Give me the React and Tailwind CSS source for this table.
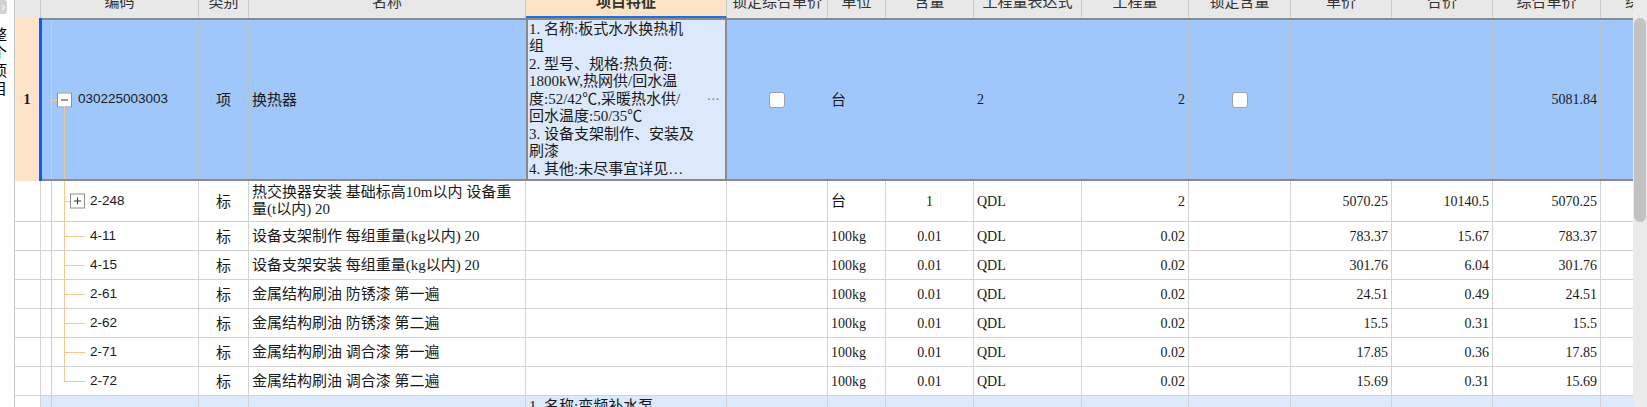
import React from 'react';

const SERIF = "font-['Liberation_Serif','Noto_Sans_CJK_SC',serif]";
const SANS = "font-['Liberation_Sans','Noto_Sans_CJK_SC',sans-serif]";
const CJK = "font-['Noto_Sans_CJK_SC',sans-serif]";
const ORANGE = 'bg-[#f8c78b]';

const headers = [
  { label: '', w: 'w-[26px]' },
  { label: '编码', w: 'w-[158px]' },
  { label: '类别', w: 'w-[50px]' },
  { label: '名称', w: 'w-[277px]' },
  { label: '项目特征', w: 'w-[201px]', active: true },
  { label: '锁定综合单价', w: 'w-[101px]' },
  { label: '单位', w: 'w-[58px]' },
  { label: '含量', w: 'w-[88px]' },
  { label: '工程量表达式', w: 'w-[108px]' },
  { label: '工程量', w: 'w-[107px]' },
  { label: '锁定含量', w: 'w-[102px]' },
  { label: '单价', w: 'w-[101px]' },
  { label: '合价', w: 'w-[101px]' },
  { label: '综合单价', w: 'w-[108px]' },
];

const features = [
  '1. 名称:板式水水换热机',
  '组',
  '2. 型号、规格:热负荷:',
  '1800kW,热网供/回水温',
  '度:52/42℃,采暖热水供/',
  '回水温度:50/35℃',
  '3. 设备支架制作、安装及',
  '刷漆',
  '4. 其他:未尽事宜详见…',
];

// 子目（定额）行
const subItems = [
  { code: '2-248', name: ['热交换器安装 基础标高10m以内 设备重', '量(t以内) 20'], unit: '台', qty: '1', amt: '2', price: '5070.25', total: '10140.5', uprice: '5070.25', box: true },
  { code: '4-11', name: ['设备支架制作 每组重量(kg以内) 20'], unit: '100kg', qty: '0.01', amt: '0.02', price: '783.37', total: '15.67', uprice: '783.37' },
  { code: '4-15', name: ['设备支架安装 每组重量(kg以内) 20'], unit: '100kg', qty: '0.01', amt: '0.02', price: '301.76', total: '6.04', uprice: '301.76' },
  { code: '2-61', name: ['金属结构刷油 防锈漆 第一遍'], unit: '100kg', qty: '0.01', amt: '0.02', price: '24.51', total: '0.49', uprice: '24.51' },
  { code: '2-62', name: ['金属结构刷油 防锈漆 第二遍'], unit: '100kg', qty: '0.01', amt: '0.02', price: '15.5', total: '0.31', uprice: '15.5' },
  { code: '2-71', name: ['金属结构刷油 调合漆 第一遍'], unit: '100kg', qty: '0.01', amt: '0.02', price: '17.85', total: '0.36', uprice: '17.85' },
  { code: '2-72', name: ['金属结构刷油 调合漆 第二遍'], unit: '100kg', qty: '0.01', amt: '0.02', price: '15.69', total: '0.31', uprice: '15.69', last: true },
];

const cell = 'shrink-0 h-full flex items-center overflow-hidden border-r';

const TreeBox = ({ plus, className }) => (
  <span className={`absolute top-1/2 -translate-y-1/2 w-[15px] h-[15px] border border-[#8f8f8f] bg-white flex items-center justify-center ${className}`}>
    <span className="relative w-[7px] h-px bg-[#333]">
      {plus && <span className="absolute left-[3px] -top-[3px] w-px h-[7px] bg-[#333]" />}
    </span>
  </span>
);

const Check = () => (
  <span className="w-[16px] h-[16px] rounded-[3px] border border-[#a0a0a0] bg-white" />
);

const SubRow = ({ item }) => (
  <div className={`${item.box ? 'h-[41px]' : 'h-[29px]'} shrink-0 flex border-b border-[#d3d3d3]`}>
    <div className={`${cell} w-[26px] border-[#d3d3d3]`} />
    <div className={`${cell} w-[158px] border-[#d3d3d3] relative`}>
      <span className={`absolute left-[10px] inset-y-0 w-px ${ORANGE}`} />
      <span className={`absolute left-[23px] top-0 w-px ${ORANGE} ${item.last ? 'h-1/2' : 'bottom-0'}`} />
      {item.box ? (
        <>
          <span className={`absolute left-[23px] top-1/2 w-[6px] h-px ${ORANGE}`} />
          <TreeBox plus className="left-[29px]" />
        </>
      ) : (
        <span className={`absolute left-[23px] top-1/2 w-[21px] h-px ${ORANGE}`} />
      )}
      <span className={`${SANS} text-[13.5px] pl-[49px]`}>{item.code}</span>
    </div>
    <div className={`${cell} w-[50px] border-[#d3d3d3] justify-center ${CJK} text-[15px]`}>标</div>
    <div className={`${cell} w-[277px] border-[#d3d3d3] pl-[3px] ${SERIF} text-[15px] leading-[17px]`}>
      <div className="whitespace-nowrap">
        {item.name.map((l) => <div key={l}>{l}</div>)}
      </div>
    </div>
    <div className={`${cell} w-[201px] border-[#d3d3d3]`} />
    <div className={`${cell} w-[101px] border-[#d3d3d3]`} />
    <div className={`${cell} w-[58px] border-[#d3d3d3] pl-[3px] ${SERIF} ${item.unit === '台' ? 'text-[15px]' : 'text-[14px]'}`}>{item.unit}</div>
    <div className={`${cell} w-[88px] border-[#d3d3d3] justify-center ${SERIF} text-[14px]`}>{item.qty}</div>
    <div className={`${cell} w-[108px] border-[#d3d3d3] pl-[3px] ${SERIF} text-[14px]`}>QDL</div>
    <div className={`${cell} w-[107px] border-[#d3d3d3] justify-end pr-[3px] ${SERIF} text-[14px]`}>{item.amt}</div>
    <div className={`${cell} w-[102px] border-[#d3d3d3]`} />
    <div className={`${cell} w-[101px] border-[#d3d3d3] justify-end pr-[3px] ${SERIF} text-[14px]`}>{item.price}</div>
    <div className={`${cell} w-[101px] border-[#d3d3d3] justify-end pr-[3px] ${SERIF} text-[14px]`}>{item.total}</div>
    <div className={`${cell} w-[108px] border-[#d3d3d3] justify-end pr-[3px] ${SERIF} text-[14px]`}>{item.uprice}</div>
    <div className={`${cell} w-[32px] border-transparent`} />
  </div>
);

export default function App() {
  return (
    <div className="w-[1647px] h-[407px] overflow-hidden flex bg-white text-[#1a1a1a]">
      {/* side panel */}
      <div className="w-[15px] shrink-0 border-r border-[#c8c8c8] overflow-hidden">
        <div className="w-[7px] h-[14px] rounded-r-[3px] bg-[#d2d2d2] flex items-center justify-center">
          <svg width="5" height="7" viewBox="0 0 5 7">
            <path d="M1 1l2.5 2.5L1 6" stroke="#f4f4f4" strokeWidth="1.2" fill="none" />
          </svg>
        </div>
        <div className={`${CJK} text-[15px] leading-[18px] -ml-[8px] pt-[11px] flex flex-col text-black`}>
          {['整', '个', '项', '目'].map((c) => (
            <span key={c}>{c}</span>
          ))}
        </div>
      </div>

      {/* grid */}
      <div className="w-[1618px] shrink-0 flex flex-col overflow-hidden">
        {/* header */}
        <div className="h-[18px] flex shrink-0 bg-[#e8e8e8]">
          {headers.map((h) => (
            <div
              key={h.label || 'num'}
              className={`${h.w} shrink-0 h-full overflow-hidden border-r border-[#c9c9c9] ${h.active ? 'bg-[#fde3c5] border-b-2 border-b-[#1e6fe0] font-bold' : ''}`}
            >
              <div className={`${CJK} text-[15px] leading-[20px] -mt-[9px] text-center text-[#333] whitespace-nowrap`}>
                {h.label}
              </div>
            </div>
          ))}
          <div className="w-[32px] shrink-0 h-full overflow-hidden">
            <div className={`${CJK} w-[108px] text-[15px] leading-[20px] -mt-[9px] text-center text-[#333] whitespace-nowrap`}>
              综合合价
            </div>
          </div>
        </div>

        {/* 清单行 (selected) */}
        <div className="h-[163px] flex shrink-0">
          <div className="w-[24px] shrink-0 bg-[#fde4c8] flex items-center justify-center font-['Liberation_Serif',serif] font-bold text-[14px]">
            1
          </div>
          <div className="w-[3px] shrink-0 bg-[#0b5ef0]" />
          <div className="flex-1 flex border-y-2 border-[#8a8a8a] bg-[#9fc7fb]">
            <div className={`${cell} w-[157px] border-[#b9c1cc] relative`}>
              <span className={`absolute left-[9px] inset-y-0 w-px ${ORANGE}`} />
              <span className={`absolute left-[9px] top-1/2 w-[6px] h-px ${ORANGE}`} />
              <TreeBox className="left-[15px]" />
              <span className={`absolute left-[22px] top-[calc(50%_+_7px)] bottom-0 w-px ${ORANGE}`} />
              <span className={`${SANS} text-[13.5px] pl-[36px]`}>030225003003</span>
            </div>
            <div className={`${cell} w-[50px] border-[#b9c1cc] justify-center ${CJK} text-[15px]`}>项</div>
            <div className={`${cell} w-[277px] border-[#b9c1cc] pl-[3px] ${CJK} text-[15px]`}>换热器</div>
            <div className="shrink-0 w-[201px] h-full flex items-center border-x-2 border-[#8a8a8a] bg-[#dce8fc]">
              <div className={`${SERIF} text-[15px] leading-[17.5px] pl-[1px] flex-1 whitespace-nowrap overflow-hidden`}>
                {features.map((l) => (
                  <div key={l}>{l}</div>
                ))}
              </div>
              <span className="text-[#3d86e6] text-[12px] pr-[5px] tracking-[1px]">···</span>
            </div>
            <div className={`${cell} w-[101px] border-[#b9c1cc] justify-center`}>
              <Check />
            </div>
            <div className={`${cell} w-[58px] border-[#b9c1cc] pl-[3px] ${CJK} text-[15px]`}>台</div>
            <div className={`${cell} w-[88px] border-[#b9c1cc]`} />
            <div className={`${cell} w-[108px] border-[#b9c1cc] pl-[3px] ${SERIF} text-[14px]`}>2</div>
            <div className={`${cell} w-[107px] border-[#b9c1cc] justify-end pr-[3px] ${SERIF} text-[14px]`}>2</div>
            <div className={`${cell} w-[102px] border-[#b9c1cc] justify-center`}>
              <Check />
            </div>
            <div className={`${cell} w-[101px] border-[#b9c1cc]`} />
            <div className={`${cell} w-[101px] border-[#b9c1cc]`} />
            <div className={`${cell} w-[108px] border-[#b9c1cc] justify-end pr-[3px] ${SERIF} text-[14px]`}>5081.84</div>
            <div className={`${cell} w-[32px] border-transparent`} />
          </div>
        </div>

        {subItems.map((item) => (
          <SubRow key={item.code} item={item} />
        ))}

        {/* next 清单 row, cut off */}
        <div className="flex-1 flex">
          <div className={`${cell} w-[26px] border-[#d3d3d3]`} />
          <div className="flex-1 flex bg-[#dce8fb]">
            <div className={`${cell} w-[158px] border-[#d3d3d3] relative`}>
              <span className={`absolute left-[10px] inset-y-0 w-px ${ORANGE}`} />
            </div>
            <div className={`${cell} w-[50px] border-[#d3d3d3]`} />
            <div className={`${cell} w-[277px] border-[#d3d3d3]`} />
            <div className={`shrink-0 h-full overflow-hidden border-r border-[#d3d3d3] w-[201px] pl-[3px] pt-[2px] ${SERIF} text-[15px] leading-[17.5px] whitespace-nowrap`}>
              1. 名称:变频补水泵
            </div>
            <div className={`${cell} w-[101px] border-[#d3d3d3]`} />
            <div className={`${cell} w-[58px] border-[#d3d3d3]`} />
            <div className={`${cell} w-[88px] border-[#d3d3d3]`} />
            <div className={`${cell} w-[108px] border-[#d3d3d3]`} />
            <div className={`${cell} w-[107px] border-[#d3d3d3]`} />
            <div className={`${cell} w-[102px] border-[#d3d3d3]`} />
            <div className={`${cell} w-[101px] border-[#d3d3d3]`} />
            <div className={`${cell} w-[101px] border-[#d3d3d3]`} />
            <div className={`${cell} w-[108px] border-[#d3d3d3]`} />
            <div className={`${cell} w-[32px] border-transparent`} />
          </div>
        </div>
      </div>

      {/* scrollbar */}
      <div className="w-[14px] shrink-0 bg-[#ebebeb] pt-[18px] px-[1px]">
        <div className="h-[204px] rounded-[6px] bg-[#c2c2c2]" />
      </div>
    </div>
  );
}
